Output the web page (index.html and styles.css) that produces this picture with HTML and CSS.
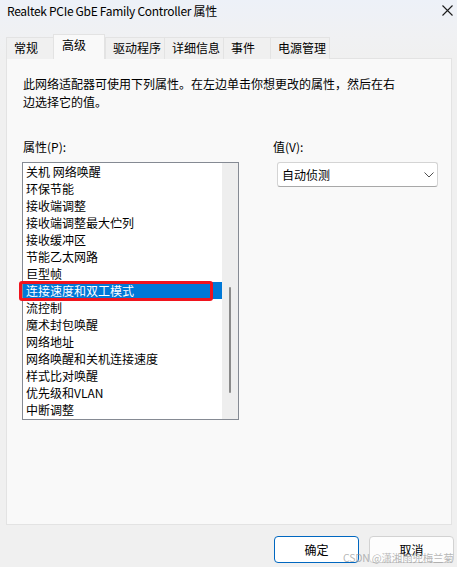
FILE: index.html
```html
<!DOCTYPE html>
<html lang="zh-CN">
<head>
<meta charset="utf-8">
<title>Realtek PCIe GbE Family Controller 属性</title>
<link rel="stylesheet" href="styles.css">
</head>
<body>
<div class="window">
  <div class="head">
    <div class="titlebar">
      <span class="title">Realtek PCIe GbE Family Controller 属性</span>
      <svg class="close" width="11" height="11" viewBox="0 0 11 11"><path d="M0.5 0.5 L10.5 10.5 M10.5 0.5 L0.5 10.5" stroke="#1b1b1b" stroke-width="1.1" fill="none"/></svg>
    </div>
    <div class="tabs">
      <div class="tab">常规</div>
      <div class="tab active">高级</div>
      <div class="tab">驱动程序</div>
      <div class="tab">详细信息</div>
      <div class="tab">事件</div>
      <div class="tab">电源管理</div>
    </div>
  </div>
  <div class="panel">
    <p class="desc">此网络适配器可使用下列属性。在左边单击你想更改的属性，然后在右边选择它的值。</p>
    <div class="cols">
      <div class="col-left">
        <div class="label">属性(P):</div>
        <div class="listbox">
          <ul class="items">
            <li>关机 网络唤醒</li>
            <li>环保节能</li>
            <li>接收端调整</li>
            <li>接收端调整最大伫列</li>
            <li>接收缓冲区</li>
            <li>节能乙太网路</li>
            <li>巨型帧</li>
            <li class="sel">连接速度和双工模式</li>
            <li>流控制</li>
            <li>魔术封包唤醒</li>
            <li>网络地址</li>
            <li>网络唤醒和关机连接速度</li>
            <li>样式比对唤醒</li>
            <li>优先级和VLAN</li>
            <li>中断调整</li>
          </ul>
          <div class="track"><div class="thumb"></div></div>
          <div class="mark"></div>
        </div>
      </div>
      <div class="col-right">
        <div class="label">值(V):</div>
        <div class="combo">
          <span>自动侦测</span>
          <svg class="chev" width="10" height="6" viewBox="0 0 10 6"><path d="M0.5 0.5 L5 5 L9.5 0.5" stroke="#505050" stroke-width="1" fill="none"/></svg>
        </div>
      </div>
    </div>
  </div>
  <div class="buttons">
    <button class="btn primary">确定</button>
    <button class="btn">取消</button>
    <span class="watermark">CSDN @潇湘雨兜梅兰菊</span>
  </div>
</div>
</body>
</html>
```
FILE: styles.css
```css
* { box-sizing: border-box; }
html, body { margin: 0; padding: 0; }
body {
  width: 457px;
  height: 567px;
  overflow: hidden;
  background: #f0f0f0;
  font-family: "Noto Sans CJK SC", "Noto Sans", sans-serif;
  font-size: 12px;
  color: #000;
}
.window { width: 457px; height: 567px; }
.head {
  background: linear-gradient(#edf1f8, #f0f1f3 60%, #f0f0f0);
  padding-top: 0;
}
.titlebar {
  height: 22px;
  display: flex;
  align-items: center;
  justify-content: space-between;
  padding: 0 4px 0 7px;
}
.title { font-size: 12px; line-height: 14px; color: #000; letter-spacing: -0.3px; }
.close { margin-top: -1px; }
.tabs {
  display: flex;
  align-items: flex-end;
  height: 25px;
  margin: 12px 0 -1px 6px;
  position: relative;
  z-index: 2;
}
.tab {
  height: 22px;
  min-width: 48px;
  padding: 0 3px 0 7px;
  line-height: 20px;
  border: 1px solid #e3e3e3;
  border-bottom: none;
  margin-right: -1px;
  background: #f0f0f0;
  white-space: nowrap;
}
.tab.active {
  height: 25px;
  min-width: 52px;
  padding-left: 8px;
  line-height: 20px;
  background: #f9f9f9;
  border-color: #e3e3e3;
  margin-right: 0;
}
.panel {
  margin: 0 5px 0 6px;
  height: 467px;
  background: #f9f9f9;
  border: 1px solid #e3e3e3;
  padding: 16px 16px 0 16px;
}
.desc {
  margin: 0;
  width: 380px;
  line-height: 18px;
}
.cols {
  display: flex;
  margin-top: 27px;
}
.label { line-height: 18px; }
.col-left { width: 216px; margin-left: -1px; }
.col-left .label { margin-left: 1px; }
.listbox {
  position: relative;
  margin-top: 6px;
  width: 217px;
  height: 258px;
  border: 1px solid #858a93;
  background: #fff;
  display: flex;
}
.items {
  list-style: none;
  margin: 0;
  padding: 0;
  flex: 1;
}
.items li {
  height: 17px;
  line-height: 17px;
  padding-left: 3px;
  white-space: nowrap;
}
.items li.sel { background: #0078d7; color: #fff; }
.track {
  width: 16px;
  background: #eeeeee;
}
.thumb {
  width: 2px;
  height: 106px;
  margin: 124px 0 0 7px;
  background: #8a8a8a;
  border-radius: 1px;
}
.mark {
  position: absolute;
  left: -4px;
  top: 118px;
  width: 194px;
  height: 20px;
  border: 3px solid #f0141e;
  border-radius: 3px;
}
.col-right { margin-left: 35px; }
.combo {
  margin: 6px 0 0 4px;
  width: 161px;
  height: 25px;
  background: #fff;
  border: 1px solid #d4d4d4;
  border-bottom-color: #a8a8a8;
  border-radius: 3px;
  display: flex;
  align-items: center;
  justify-content: space-between;
  padding: 0 3px 0 4px;
}
.chev { margin-top: 1px; }
.buttons {
  position: relative;
  display: flex;
  justify-content: flex-end;
  gap: 10px;
  padding: 11px 3px 0 0;
}
.btn {
  font-family: "Noto Sans CJK SC", sans-serif;
  font-size: 12px;
  color: #000;
  width: 85px;
  height: 27px;
  background: #fdfdfd;
  border: 1px solid #d2d2d2;
  border-radius: 4px;
  padding: 0;
}
.btn.primary { border: 1px solid #0067c0; background: #fff; }
.watermark {
  position: absolute;
  left: 343px;
  top: 26px;
  font-size: 10.5px;
  line-height: 13px;
  letter-spacing: -0.2px;
  color: rgba(150, 150, 150, 0.7);
  white-space: nowrap;
  pointer-events: none;
}
```
